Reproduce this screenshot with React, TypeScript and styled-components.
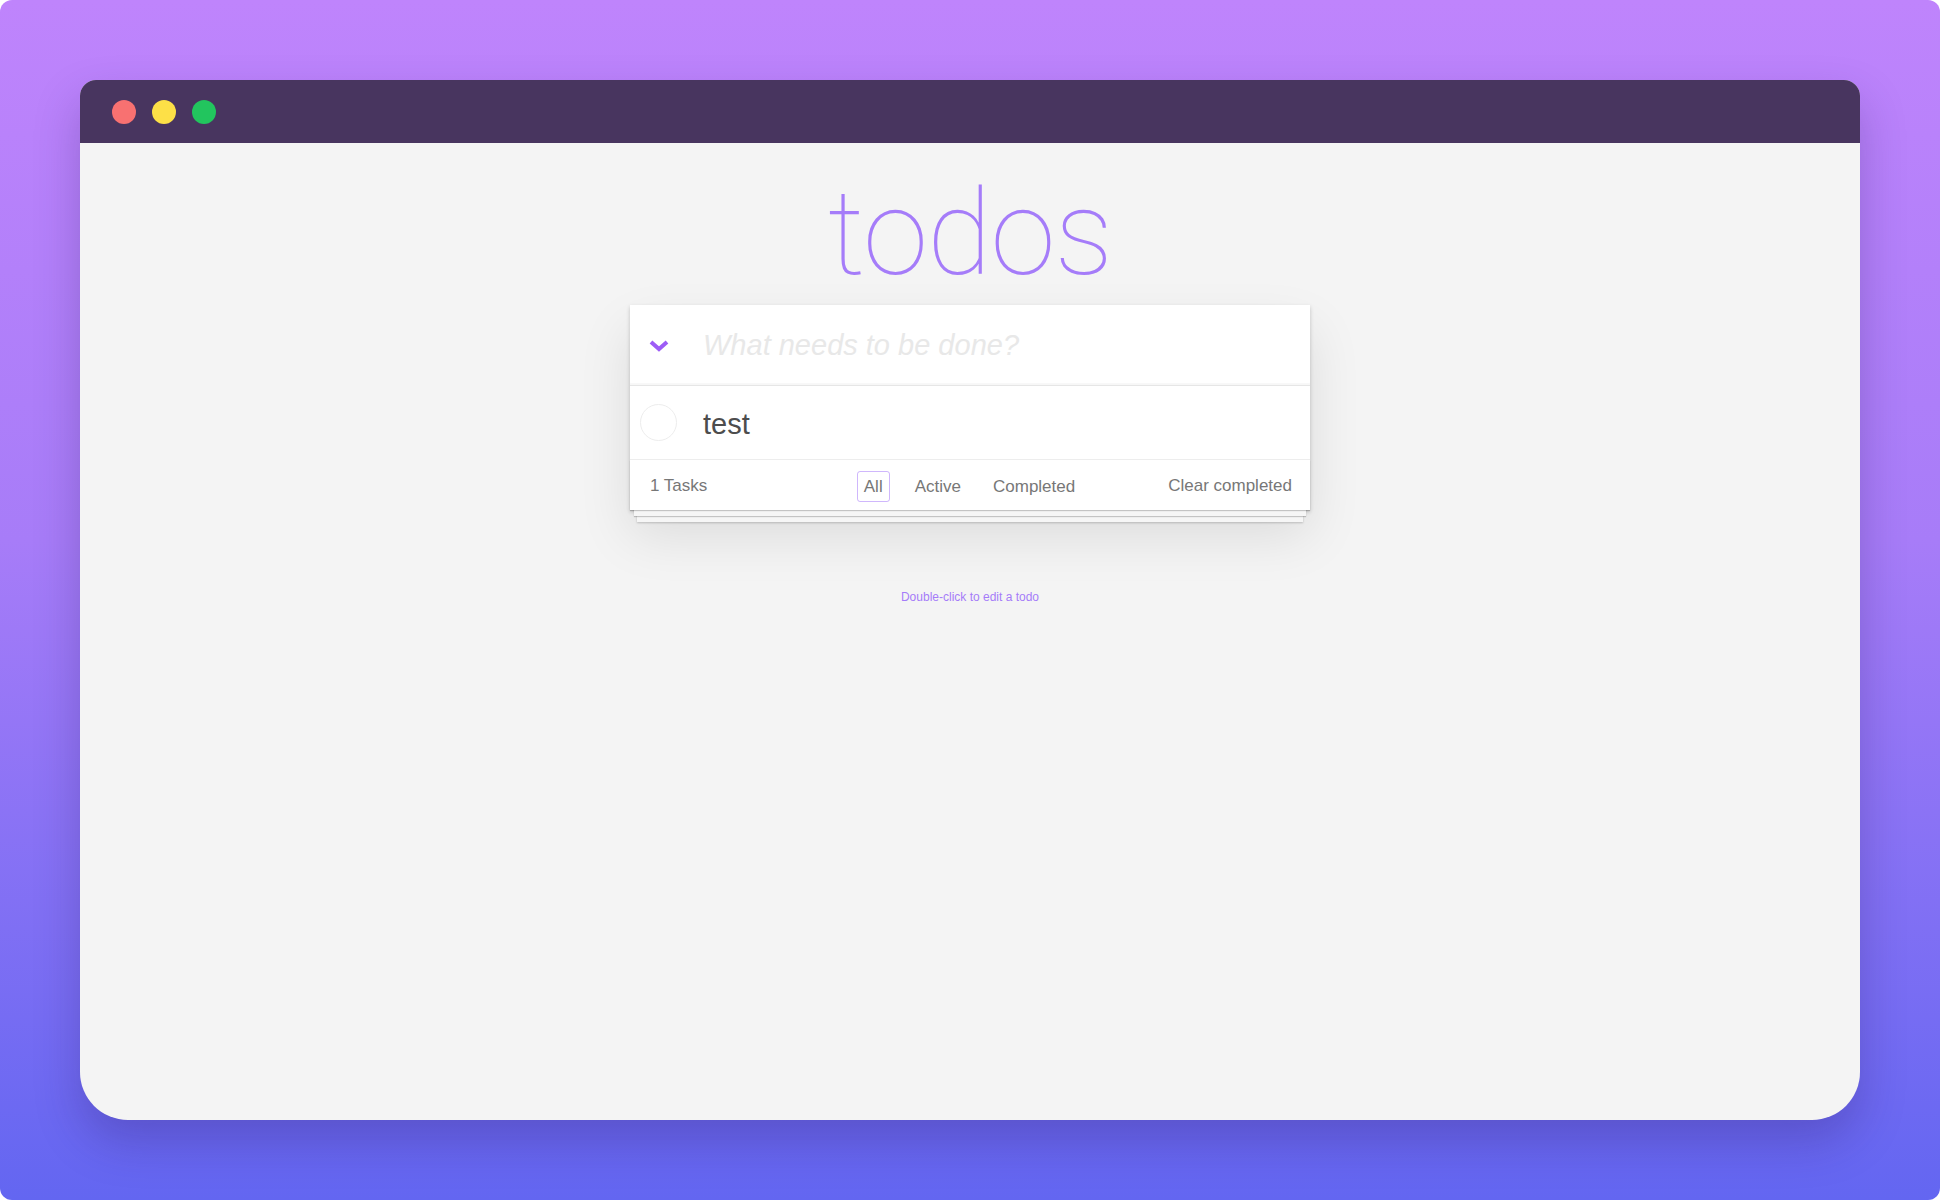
import { createGlobalStyle } from "styled-components";
import styled from "styled-components";

const GlobalStyle = createGlobalStyle`
  html, body {
    margin: 0;
    padding: 0;
    background: #ffffff;
  }
  * {
    box-sizing: border-box;
  }
`;

const filters = ["All", "Active", "Completed"];

export default function App() {
  return (
    <>
      <GlobalStyle />
      <Page>
        <Window>
          <TitleBar>
            <Light color="#f87171" />
            <Light color="#fde047" />
            <Light color="#22c55e" />
          </TitleBar>
          <Content>
            <Heading>todos</Heading>
            <Card>
              <NewTodoRow>
                <ToggleAll>
                  <svg width="20" height="14" viewBox="0 0 20 14">
                    <path
                      d="M2 3 L10 10 L18 3"
                      fill="none"
                      stroke="#9d5cf6"
                      strokeWidth="4"
                      strokeLinejoin="miter"
                    />
                  </svg>
                </ToggleAll>
                <NewTodoInput placeholder="What needs to be done?" readOnly />
              </NewTodoRow>
              <TodoRow>
                <CheckCircle />
                <TodoLabel>test</TodoLabel>
              </TodoRow>
              <Footer>
                <Count>1 Tasks</Count>
                <Filters>
                  {filters.map((f) => (
                    <FilterLink key={f} selected={f === "All"}>
                      {f}
                    </FilterLink>
                  ))}
                </Filters>
                <ClearButton>Clear completed</ClearButton>
              </Footer>
            </Card>
            <Hint>Double-click to edit a todo</Hint>
          </Content>
        </Window>
      </Page>
    </>
  );
}

const Page = styled.div`
  width: 1940px;
  height: 1200px;
  border-radius: 12px;
  background: linear-gradient(180deg, #bf84fc 0%, #a77cf8 45%, #6366f1 100%);
  padding: 80px;
  overflow: hidden;
`;

const Window = styled.div`
  width: 1780px;
  height: 1040px;
  display: flex;
  flex-direction: column;
  border-radius: 16px 16px 48px 48px;
  overflow: hidden;
  background: #f4f4f4;
  box-shadow: 0 22px 45px rgba(40, 20, 90, 0.25);
`;

const TitleBar = styled.div`
  height: 63px;
  flex-shrink: 0;
  background: #48355f;
  display: flex;
  align-items: center;
  gap: 16px;
  padding: 0 0 0 32px;
`;

const Light = styled.span<{ color: string }>`
  width: 24px;
  height: 24px;
  border-radius: 50%;
  background: ${({ color }) => color};
`;

const Content = styled.div`
  flex: 1;
  display: flex;
  flex-direction: column;
  align-items: center;
  padding-top: 32px;
`;

const Heading = styled.h1`
  margin: 0;
  font-family: "Roboto", "Liberation Sans", sans-serif;
  font-weight: 100;
  font-size: 118px;
  line-height: 118px;
  color: #a57cf9;
  letter-spacing: -1px;
`;

const Card = styled.div`
  position: relative;
  z-index: 0;
  width: 680px;
  margin-top: 12px;
  background: #ffffff;
  box-shadow: 0 2px 4px rgba(0, 0, 0, 0.2), 0 25px 50px rgba(0, 0, 0, 0.1);
  font-family: "Liberation Sans", "Helvetica Neue", Arial, sans-serif;
`;

const NewTodoRow = styled.div`
  height: 81px;
  display: flex;
  align-items: center;
  border-bottom: 1px solid #e6e6e6;
  box-shadow: inset 0 -2px 1px rgba(0, 0, 0, 0.03);
`;

const ToggleAll = styled.div`
  width: 58px;
  padding-left: 19px;
  padding-top: 2px;
  display: flex;
  align-items: center;
`;

const NewTodoInput = styled.input`
  flex: 1;
  margin-left: 15px;
  border: none;
  outline: none;
  background: transparent;
  font-family: "Liberation Sans", Arial, sans-serif;
  font-size: 29px;
  color: #4d4d4d;
  padding: 0;

  &::placeholder {
    font-style: italic;
    color: #e8e8e8;
  }
`;

const TodoRow = styled.div`
  height: 74px;
  display: flex;
  align-items: center;
  border-bottom: 1px solid #ededed;
`;

const CheckCircle = styled.span`
  width: 37px;
  height: 37px;
  margin-left: 10px;
  border-radius: 50%;
  border: 1px solid #ededed;
  flex-shrink: 0;
`;

const TodoLabel = styled.span`
  margin-left: 26px;
  font-size: 29px;
  color: #4d4d4d;
  padding-top: 3px;
`;

const Footer = styled.div`
  position: relative;
  height: 50px;
  display: flex;
  align-items: center;
  justify-content: space-between;
  padding: 2px 18px 0 20px;
  color: #777777;
  font-size: 17px;

  &::before {
    content: "";
    position: absolute;
    left: 0;
    right: 0;
    bottom: 0;
    height: 50px;
    z-index: -1;
    box-shadow: 0 1px 1px rgba(0, 0, 0, 0.2), 0 10px 0 -4px #f6f6f6,
      0 11px 1px -4px rgba(0, 0, 0, 0.2), 0 19px 0 -7px #f6f6f6,
      0 20px 2px -7px rgba(0, 0, 0, 0.2);
  }
`;

const Count = styled.span`
  width: 200px;
`;

const Filters = styled.div`
  display: flex;
  align-items: center;
  gap: 18px;
  margin-left: -3px;
`;

const FilterLink = styled.span<{ selected: boolean }>`
  padding: 5px 6px 4px;
  border-radius: 3px;
  border: 1px solid
    ${({ selected }) => (selected ? "rgba(167, 124, 249, 0.55)" : "transparent")};
  color: #777777;
`;

const ClearButton = styled.span`
  width: 200px;
  text-align: right;
`;

const Hint = styled.p`
  margin: 80px 0 0;
  font-family: "Liberation Sans", Arial, sans-serif;
  font-size: 12px;
  color: #a57cf9;
`;
